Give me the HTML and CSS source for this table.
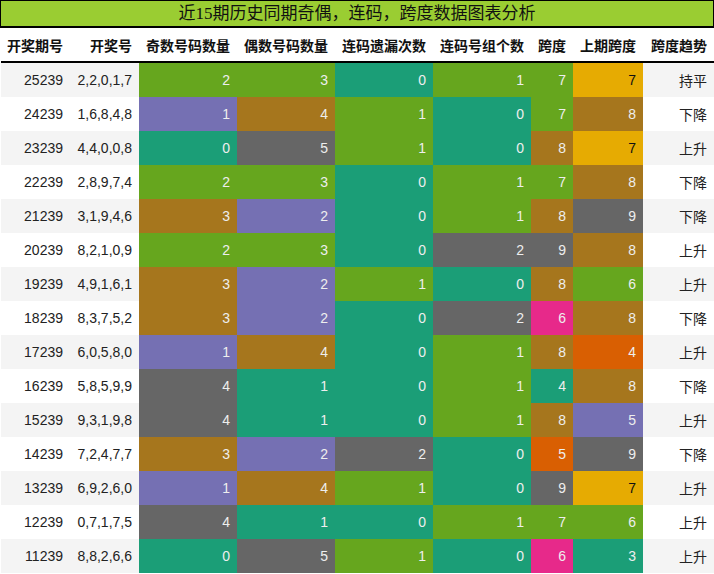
FILE: index.html
```html
<!DOCTYPE html>
<html>
<head>
<meta charset="utf-8">
<link rel="stylesheet" href="styles.css">
</head>
<body>
<div class="title">近15期历史同期奇偶，连码，跨度数据图表分析</div>
<table class="grid">
<colgroup>
<col class="w69"><col class="w69"><col class="w98"><col class="w98"><col class="w98"><col class="w98"><col class="w42"><col class="w70"><col class="w71">
</colgroup>
<thead>
<tr><th>开奖期号</th><th>开奖号</th><th>奇数号码数量</th><th>偶数号码数量</th><th>连码遗漏次数</th><th>连码号组个数</th><th>跨度</th><th>上期跨度</th><th>跨度趋势</th></tr>
</thead>
<tbody>
<tr class="odd"><td>25239</td><td>2,2,0,1,7</td><td class="c-green">2</td><td class="c-green">3</td><td class="c-teal">0</td><td class="c-green">1</td><td class="c-green">7</td><td class="c-yellow">7</td><td class="t">持平</td></tr>
<tr><td>24239</td><td>1,6,8,4,8</td><td class="c-purple">1</td><td class="c-brown">4</td><td class="c-green">1</td><td class="c-teal">0</td><td class="c-green">7</td><td class="c-brown">8</td><td class="t">下降</td></tr>
<tr class="odd"><td>23239</td><td>4,4,0,0,8</td><td class="c-teal">0</td><td class="c-gray">5</td><td class="c-green">1</td><td class="c-teal">0</td><td class="c-brown">8</td><td class="c-yellow">7</td><td class="t">上升</td></tr>
<tr><td>22239</td><td>2,8,9,7,4</td><td class="c-green">2</td><td class="c-green">3</td><td class="c-teal">0</td><td class="c-green">1</td><td class="c-green">7</td><td class="c-brown">8</td><td class="t">下降</td></tr>
<tr class="odd"><td>21239</td><td>3,1,9,4,6</td><td class="c-brown">3</td><td class="c-purple">2</td><td class="c-teal">0</td><td class="c-green">1</td><td class="c-brown">8</td><td class="c-gray">9</td><td class="t">下降</td></tr>
<tr><td>20239</td><td>8,2,1,0,9</td><td class="c-green">2</td><td class="c-green">3</td><td class="c-teal">0</td><td class="c-gray">2</td><td class="c-gray">9</td><td class="c-brown">8</td><td class="t">上升</td></tr>
<tr class="odd"><td>19239</td><td>4,9,1,6,1</td><td class="c-brown">3</td><td class="c-purple">2</td><td class="c-green">1</td><td class="c-teal">0</td><td class="c-brown">8</td><td class="c-green">6</td><td class="t">上升</td></tr>
<tr><td>18239</td><td>8,3,7,5,2</td><td class="c-brown">3</td><td class="c-purple">2</td><td class="c-teal">0</td><td class="c-gray">2</td><td class="c-pink">6</td><td class="c-brown">8</td><td class="t">下降</td></tr>
<tr class="odd"><td>17239</td><td>6,0,5,8,0</td><td class="c-purple">1</td><td class="c-brown">4</td><td class="c-teal">0</td><td class="c-green">1</td><td class="c-brown">8</td><td class="c-orange">4</td><td class="t">上升</td></tr>
<tr><td>16239</td><td>5,8,5,9,9</td><td class="c-gray">4</td><td class="c-teal">1</td><td class="c-teal">0</td><td class="c-green">1</td><td class="c-teal">4</td><td class="c-brown">8</td><td class="t">下降</td></tr>
<tr class="odd"><td>15239</td><td>9,3,1,9,8</td><td class="c-gray">4</td><td class="c-teal">1</td><td class="c-teal">0</td><td class="c-green">1</td><td class="c-brown">8</td><td class="c-purple">5</td><td class="t">上升</td></tr>
<tr><td>14239</td><td>7,2,4,7,7</td><td class="c-brown">3</td><td class="c-purple">2</td><td class="c-gray">2</td><td class="c-teal">0</td><td class="c-orange">5</td><td class="c-gray">9</td><td class="t">下降</td></tr>
<tr class="odd"><td>13239</td><td>6,9,2,6,0</td><td class="c-purple">1</td><td class="c-brown">4</td><td class="c-green">1</td><td class="c-teal">0</td><td class="c-gray">9</td><td class="c-yellow">7</td><td class="t">上升</td></tr>
<tr><td>12239</td><td>0,7,1,7,5</td><td class="c-gray">4</td><td class="c-teal">1</td><td class="c-teal">0</td><td class="c-green">1</td><td class="c-green">7</td><td class="c-green">6</td><td class="t">上升</td></tr>
<tr class="odd"><td>11239</td><td>8,8,2,6,6</td><td class="c-teal">0</td><td class="c-gray">5</td><td class="c-green">1</td><td class="c-teal">0</td><td class="c-pink">6</td><td class="c-teal">3</td><td class="t">上升</td></tr>
</tbody>
</table>
</body>
</html>
```

FILE: styles.css
```css
html, body {
  margin: 0;
  padding: 0;
  background: #ffffff;
}
body {
  width: 714px;
  font-family: "Liberation Sans", "Noto Sans CJK SC", sans-serif;
}
.title {
  box-sizing: border-box;
  height: 28px;
  border: 1px solid #000;
  border-bottom-width: 2px;
  background: #9acd32;
  color: #111;
  text-align: center;
  font-family: "Liberation Serif", "Noto Sans CJK SC", serif;
  font-size: 17px;
  line-height: 25px;
}
.grid {
  margin-left: 1px;
  width: 713px;
  table-layout: fixed;
  border-collapse: separate;
  border-spacing: 0;
}
.w69 { width: 69px; }
.w98 { width: 98px; }
.w42 { width: 42px; }
.w70 { width: 70px; }
.w71 { width: 71px; }
.grid th {
  height: 35px;
  padding: 0 7px 0 0;
  text-align: right;
  font-family: "Noto Sans CJK SC", sans-serif;
  font-weight: bold;
  font-size: 14px;
  color: #111;
  border-bottom: 2px solid #000;
  white-space: nowrap;
  box-sizing: border-box;
}
.grid td {
  height: 34px;
  padding: 0 7px 0 0;
  text-align: right;
  font-size: 14px;
  color: #222;
  white-space: nowrap;
  box-sizing: border-box;
}
.grid tr.odd td { background: #f4f4f4; }
.grid td.t { font-family: "Noto Sans CJK SC", sans-serif; }
.grid tr td.c-green { background: #66a61e; color: #eeeeee; }
.grid tr td.c-teal { background: #1b9e77; color: #eeeeee; }
.grid tr td.c-purple { background: #7570b3; color: #eeeeee; }
.grid tr td.c-brown { background: #a6761d; color: #eeeeee; }
.grid tr td.c-gray { background: #666666; color: #eeeeee; }
.grid tr td.c-pink { background: #e7298a; color: #eeeeee; }
.grid tr td.c-orange { background: #d95f02; color: #eeeeee; }
.grid tr td.c-yellow { background: #e6ab02; color: #111111; }
```
